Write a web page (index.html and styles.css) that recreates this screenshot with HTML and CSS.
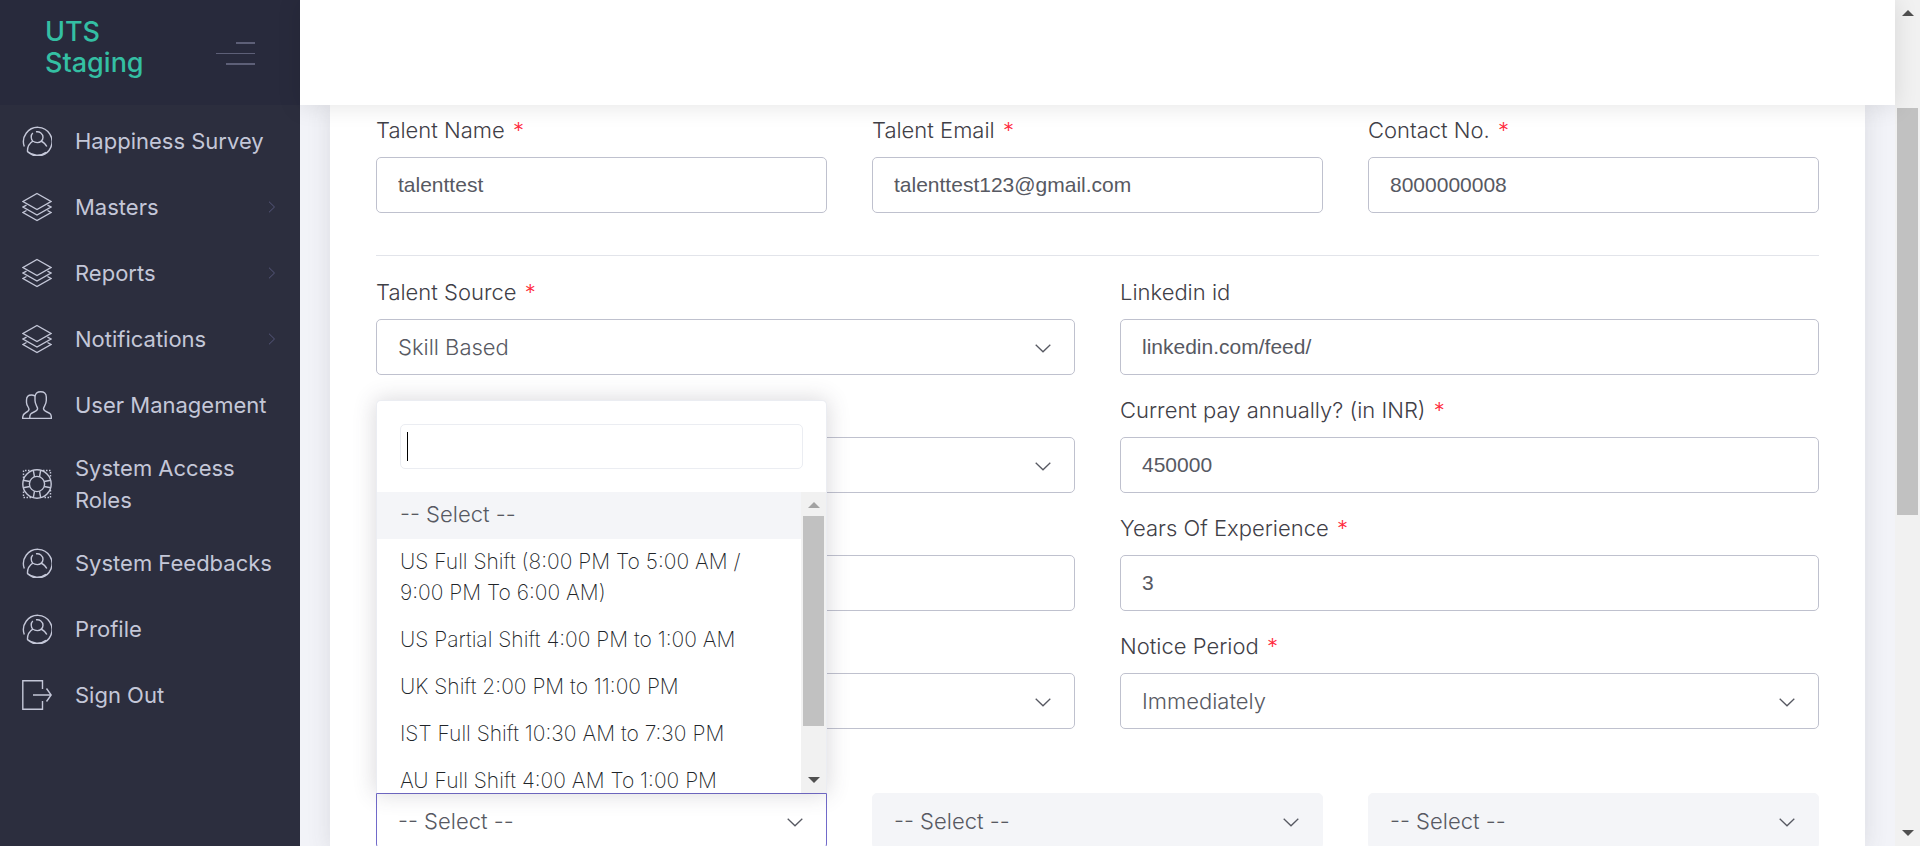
FILE: index.html
```html
<!DOCTYPE html>
<html lang="en">
<head>
<meta charset="utf-8">
<meta name="viewport" content="width=device-width, initial-scale=1">
<title>UTS Staging</title>
<link rel="stylesheet" href="styles.css">
</head>
<body>
<svg class="sprite" aria-hidden="true">
  <symbol id="i-user" viewBox="0 0 30 30"><path d="M2.300 20.500A14.300 14.300 0 1 1 5.500 25.600M5.500 25.600C5.200 20 7.300 17.200 11.200 14.800M18.800 14.800C22 16.500 23.700 18 24.800 20.600M5.500 25.600C10.500 30 18.500 30.500 24 26.200M14 5.800C17.700 5.200 21 7.600 21 11.300C21 14.500 18.300 16.600 15.300 16.600C11.800 16.600 9.200 14.300 9.200 11C9.200 9.300 9.800 8 10.800 7"/></symbol>
  <symbol id="i-layers" viewBox="0 0 30 30"><path d="M15 1.500 29 9.500 15 17.500 1 9.500ZM4.500 13.200 1 15 15 23 29 15 25.500 13.200M4.500 18.500 1 20.500 15 28.500 29 20.500 25.500 18.500"/></symbol>
  <symbol id="i-users" viewBox="0 0 30 30"><path d="M7.700 28.400H29.400C29.400 24.200 28.500 23.400 25 22C22.500 21 21.500 20.500 21.500 18.500C21.500 17 24.300 14.500 24.300 10.500V7C24.300 3.500 22 1.800 18.700 1.800S13 3.500 13 7V10.500C13 14.500 15.600 17 15.600 18.500C15.600 20.500 14.500 21 12 22C8.600 23.400 7.700 24.200 7.700 28.400ZM12.700 6C11.900 5.300 11 5 9.500 5C6.500 5 4.500 6.700 4.500 10V12.500C4.500 15.500 7 17.500 7 19.300C7 21 5.800 21.700 4 22.500C1.200 23.900 .6 25 .6 28.400H7.700"/></symbol>
  <symbol id="i-ring" viewBox="0 0 30 30"><circle cx="15" cy="15" r="14.200"/><circle cx="15" cy="15" r="7.600"/><path d="M12.500 7.800 11.300 1.200M17.500 7.800 18.700 1.200M12.500 22.200 11.300 28.800M17.500 22.200 18.700 28.800M7.800 12.500 1.200 11.300M7.800 17.500 1.200 18.700M22.200 12.500 28.800 11.300M22.200 17.500 28.800 18.700"/><path stroke-dasharray="1.500 1.500" d="M1.500 9V1.500H9M21 1.500H28.500V9M28.500 21V28.500H21M9 28.500H1.500V21"/></symbol>
  <symbol id="i-exit" viewBox="0 0 30 30"><path d="M20.500 9V.8H.8V29.200H20.500V21M11 15H29M24.500 8.500 29.200 15 24.500 21.500"/></symbol>
  <symbol id="i-right" viewBox="0 0 8 12"><path d="M1 .7 6.500 6 1 11.300"/></symbol>
  <symbol id="i-down" viewBox="0 0 16 9"><path d="M.7 .7 8 7.800 15.300 .7"/></symbol>
</svg>

<div class="app">
  <aside class="sidebar">
    <div class="brand">
      <a class="brand-name" href="#">UTS<br>Staging</a>
      <button class="toggle" type="button" aria-label="Toggle menu"><span></span><span></span><span></span></button>
    </div>
    <nav class="menu">
      <a class="item" href="#"><svg class="icon"><use href="#i-user"/></svg><span>Happiness Survey</span></a>
      <a class="item" href="#"><svg class="icon"><use href="#i-layers"/></svg><span>Masters</span><svg class="arrow"><use href="#i-right"/></svg></a>
      <a class="item" href="#"><svg class="icon"><use href="#i-layers"/></svg><span>Reports</span><svg class="arrow"><use href="#i-right"/></svg></a>
      <a class="item" href="#"><svg class="icon"><use href="#i-layers"/></svg><span>Notifications</span><svg class="arrow"><use href="#i-right"/></svg></a>
      <a class="item" href="#"><svg class="icon"><use href="#i-users"/></svg><span>User Management</span></a>
      <a class="item" href="#"><svg class="icon"><use href="#i-ring"/></svg><span>System Access Roles</span></a>
      <a class="item" href="#"><svg class="icon"><use href="#i-user"/></svg><span>System Feedbacks</span></a>
      <a class="item" href="#"><svg class="icon"><use href="#i-user"/></svg><span>Profile</span></a>
      <a class="item" href="#"><svg class="icon"><use href="#i-exit"/></svg><span>Sign Out</span></a>
    </nav>
  </aside>

  <div class="page">
    <header class="topbar"></header>
    <main class="content">
      <form class="card">
        <div class="row three">
          <div class="field"><label for="name">Talent Name <em>*</em></label><input class="control" id="name" type="text" value="talenttest"></div>
          <div class="field"><label for="email">Talent Email <em>*</em></label><input class="control" id="email" type="email" value="talenttest123@gmail.com"></div>
          <div class="field"><label for="phone">Contact No. <em>*</em></label><input class="control" id="phone" type="tel" value="8000000008"></div>
        </div>
        <hr class="rule">
        <div class="row two">
          <div class="field"><label for="source">Talent Source <em>*</em></label><div class="picker"><select class="control" id="source"><option>Skill Based</option></select><svg class="caret"><use href="#i-down"/></svg></div></div>
          <div class="field"><label for="linkedin">Linkedin id</label><input class="control" id="linkedin" type="text" value="linkedin.com/feed/"></div>
          <div class="field"><div class="picker"><select class="control" aria-label="Currency"><option></option></select><svg class="caret"><use href="#i-down"/></svg></div></div>
          <div class="field"><label for="pay">Current pay annually? (in INR) <em>*</em></label><input class="control" id="pay" type="text" value="450000"></div>
          <div class="field"><input class="control" type="text" aria-label="Expected pay"></div>
          <div class="field"><label for="years">Years Of Experience <em>*</em></label><input class="control" id="years" type="text" value="3"></div>
          <div class="field"><div class="picker"><select class="control" aria-label="Role"><option></option></select><svg class="caret"><use href="#i-down"/></svg></div></div>
          <div class="field"><label for="notice">Notice Period <em>*</em></label><div class="picker"><select class="control" id="notice"><option>Immediately</option></select><svg class="caret"><use href="#i-down"/></svg></div></div>
        </div>
        <div class="row three shifts">
          <div class="picker open">
            <select class="control" aria-label="Shift"><option>-- Select --</option></select><svg class="caret"><use href="#i-down"/></svg>
            <div class="dropdown">
              <div class="search"><input class="search-box" type="text" aria-label="Search shifts"><span class="cursor"></span></div>
              <div class="results">
                <ul class="options" role="listbox" aria-label="Shifts">
                  <li class="active" role="option" aria-selected="true">-- Select --</li>
                  <li role="option">US Full Shift (8:00 PM To 5:00 AM / 9:00 PM To 6:00 AM)</li>
                  <li role="option">US Partial Shift 4:00 PM to 1:00 AM</li>
                  <li role="option">UK Shift 2:00 PM to 11:00 PM</li>
                  <li role="option">IST Full Shift 10:30 AM to 7:30 PM</li>
                  <li role="option">AU Full Shift 4:00 AM To 1:00 PM</li>
                </ul>
                <div class="scroll" aria-hidden="true"><i class="up dim"></i><div class="track"><b class="thumb list-thumb"></b></div><i class="down"></i></div>
              </div>
            </div>
          </div>
          <div class="picker"><select class="control" aria-label="Shift start" disabled><option>-- Select --</option></select><svg class="caret"><use href="#i-down"/></svg></div>
          <div class="picker"><select class="control" aria-label="Shift end" disabled><option>-- Select --</option></select><svg class="caret"><use href="#i-down"/></svg></div>
        </div>
      </form>
    </main>
  </div>

  <div class="scroll" aria-hidden="true"><i class="up"></i><div class="track"><b class="thumb page-thumb"></b></div><i class="down"></i></div>
</div>
</body>
</html>
```
FILE: styles.css
```css
* { box-sizing: border-box; }

body {
  margin: 0;
  font-family: Inter, "Open Sans", sans-serif;
  font-size: 22px;
  font-weight: 300;
  line-height: 31px;
  color: #3f4047;
}

.sprite { position: absolute; width: 0; height: 0; }

svg { fill: none; stroke: currentColor; }

.app {
  display: grid;
  grid-template-columns: 300px minmax(0, 1fr) 25px;
  height: 100vh;
  overflow: hidden;
}

/* Sidebar */
.sidebar { background: #2c2e3e; overflow: hidden; }

.brand {
  display: flex;
  justify-content: space-between;
  height: 105px;
  padding: 16px 45px 0;
  background: #282a3c;
}

.brand-name {
  color: #34bfa3;
  font-size: 27px;
  font-weight: 500;
  text-decoration: none;
}

.toggle {
  display: flex;
  flex-direction: column;
  align-items: flex-end;
  justify-content: space-between;
  width: 39px;
  height: 23px;
  margin-top: 26px;
  padding: 0;
  border: 0;
  background: none;
}

.toggle span { height: 2px; background: #5d5f77; }
.toggle span:nth-child(1) { width: 19px; }
.toggle span:nth-child(2) { width: 39px; height: 1px; }
.toggle span:nth-child(3) { width: 29px; }

.menu { padding-top: 3px; }

.item {
  display: flex;
  align-items: center;
  min-height: 66px;
  padding: 14px 24px 14px 22px;
  color: #c4c7d8;
  font-weight: 400;
  line-height: 32px;
  text-decoration: none;
}

.item span { flex: 1; }
.icon { flex: none; width: 30px; height: 30px; margin-right: 23px; stroke-width: 1.4; }
.arrow { flex: none; width: 8px; height: 12px; color: #55577a; }

/* Page */
.page {
  display: flex;
  flex-direction: column;
  min-width: 0;
  min-height: 0;
  background: #f2f3f8;
}

.topbar {
  position: relative;
  z-index: 2;
  flex: none;
  height: 105px;
  background: #fff;
  box-shadow: 0 1px 22px 1px rgba(0, 0, 0, .1);
}

.content { flex: 1; min-height: 0; padding: 0 30px; overflow: hidden; }

.card {
  min-height: 100%;
  padding: 10px 46px 0;
  background: #fff;
  box-shadow: 0 1px 22px 1px rgba(69, 65, 78, .12);
}

.row { display: grid; gap: 20px 45px; align-items: end; }
.two { grid-template-columns: repeat(2, minmax(0, 1fr)); }
.three { grid-template-columns: repeat(3, minmax(0, 1fr)); }
.shifts { margin-top: 64px; }

.rule { margin: 42px 0 21px; border: 0; border-top: 1px solid #e2e4ea; }

.field label { display: block; margin-bottom: 11px; }
.field em { margin-left: 2px; color: #ff2a3c; font-style: normal; }

.control {
  display: block;
  width: 100%;
  height: 56px;
  padding: 0 21px;
  border: 1px solid #bfc1ce;
  border-radius: 5px;
  background: #fff;
  color: #575962;
  font: 400 21px "Liberation Sans", Arial, sans-serif;
  outline: 0;
}

.picker { position: relative; }

.picker .control {
  appearance: none;
  font: inherit;
  opacity: 1;
}

.picker .control:disabled { border-color: #f4f5f8; background: #f4f5f8; }

.caret {
  position: absolute;
  top: 25px;
  right: 24px;
  width: 16px;
  height: 9px;
  color: #575962;
  stroke-width: 1.3;
  pointer-events: none;
}

/* Open shift list */
.open .control {
  border-color: #716aca;
  border-radius: 0 0 5px 5px;
}

.dropdown {
  position: absolute;
  right: 0;
  bottom: 100%;
  left: 0;
  border: 1px solid #ebedf2;
  border-bottom: 0;
  border-radius: 5px 5px 0 0;
  background: #fff;
  box-shadow: 0 0 22px 1px rgba(69, 65, 78, .2);
}

.search { position: relative; padding: 23px; }

.search-box {
  display: block;
  width: 100%;
  height: 45px;
  border: 1px solid #ebedf2;
  border-radius: 5px;
  outline: 0;
}

.cursor {
  position: absolute;
  top: 31px;
  left: 30px;
  width: 1px;
  height: 29px;
  background: #000;
}

.results { display: flex; height: 301px; }

.options {
  flex: 1;
  margin: 0;
  padding: 0;
  overflow: hidden;
  list-style: none;
  color: #212529;
  font-size: 21px;
  font-weight: 200;
}

.options li { padding: 7px 23px 9px; }
.options .active { background: #f4f5f8; color: #575962; font-size: 22px; font-weight: 300; }

/* Scroll bars */
.scroll {
  display: flex;
  flex-direction: column;
  align-items: center;
  width: 25px;
  padding: 10px 2px;
  background: #f1f1f1;
}

.track { flex: 1; width: 100%; padding: 8px 0; }
.thumb { display: block; background: #c1c1c1; }
.page-thumb { height: 407px; margin-top: 84px; }
.list-thumb { height: 210px; }

.up, .down { border: 6px solid transparent; }
.up { border-top: 0; border-bottom-color: #505050; }
.down { border-bottom: 0; border-top-color: #505050; }
.dim { border-bottom-color: #a3a3a3; }
```
